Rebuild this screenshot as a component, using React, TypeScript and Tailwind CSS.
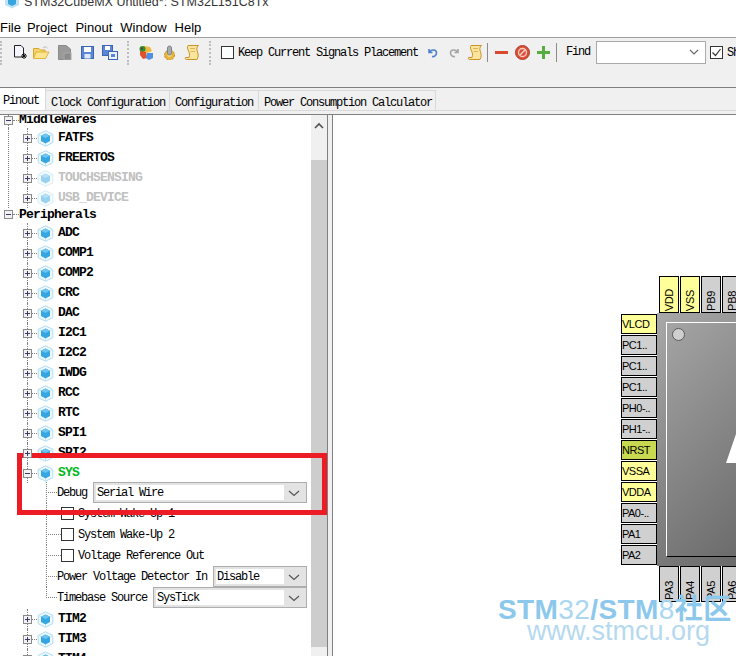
import React from 'react';

const menus = ['File', 'Project', 'Pinout', 'Window', 'Help'];
const tabs = [
  { label: 'Clock Configuration', width: 'w-[124px]' },
  { label: 'Configuration', width: 'w-[89px]' },
  { label: 'Power Consumption Calculator', width: 'w-[177px]' },
];
const upperNodes = ['ADC', 'COMP1', 'COMP2', 'CRC', 'DAC', 'I2C1', 'I2C2', 'IWDG', 'RCC', 'RTC', 'SPI1', 'SPI2'];
const leftPins = [
  { name: 'VLCD', color: 'bg-[#ffff99]' },
  { name: 'PC1..', color: 'bg-[#d0d0d0]' },
  { name: 'PC1..', color: 'bg-[#d0d0d0]' },
  { name: 'PC1..', color: 'bg-[#d0d0d0]' },
  { name: 'PH0-..', color: 'bg-[#d0d0d0]' },
  { name: 'PH1-..', color: 'bg-[#d0d0d0]' },
  { name: 'NRST', color: 'bg-[#c8d850]' },
  { name: 'VSSA', color: 'bg-[#ffff99]' },
  { name: 'VDDA', color: 'bg-[#ffff99]' },
  { name: 'PA0-..', color: 'bg-[#d0d0d0]' },
  { name: 'PA1', color: 'bg-[#d0d0d0]' },
  { name: 'PA2', color: 'bg-[#d0d0d0]' },
];

function CubeIcon({ faded = false }: { faded?: boolean }) {
  return (
    <svg width="17" height="17" viewBox="0 0 17 17" className={`shrink-0 ${faded ? 'opacity-50' : ''}`}>
      <path d="M8.5 .8 15.8 4.4V12.6L8.5 16.2 1.2 12.6V4.4Z" fill="#f3fafe" stroke="#aadcf4" />
      <path d="M1.2 4.4 4 5.8M15.8 4.4 13 5.8M8.5 13.5V16.2" fill="none" stroke="#c5e8f8" />
      <path d="M8.5 3.5 13 5.8V11L8.5 13.4 4 11V5.8Z" fill="#35a6e2" />
      <path d="M4 5.8 8.5 8 13 5.8 8.5 3.5Z" fill="#6cc4ef" />
    </svg>
  );
}

function ExpandBox({ open = false }: { open?: boolean }) {
  return (
    <span className="relative z-10 flex h-[9px] w-[9px] shrink-0 items-center justify-center border border-[#8a8a8a] bg-[#f2f2f2]">
      <span className="absolute h-px w-[5px] bg-[#3a3a6a]" />
      {!open && <span className="absolute h-[5px] w-px bg-[#3a3a6a]" />}
    </span>
  );
}

function TreeNode({ label, tone = 'text-black', faded = false, open = false }: { label: string; tone?: string; faded?: boolean; open?: boolean }) {
  return (
    <div className="relative flex h-[20px] items-center pl-[23px]">
      <span className="absolute bottom-0 left-[27px] top-0 border-l border-dotted border-[#808080]" />
      <ExpandBox open={open} />
      <span className="w-[5px] shrink-0 border-t border-dotted border-[#808080]" />
      <CubeIcon faded={faded} />
      <span className={`ml-[4px] text-[13px] font-bold tracking-[-0.8px] ${tone}`}>{label}</span>
    </div>
  );
}

function RootNode({ label, height, line = false }: { label: string; height: string; line?: boolean }) {
  return (
    <div className={`relative flex items-center pl-[4px] ${height}`}>
      {line && <span className="absolute bottom-0 left-[8px] top-0 border-l border-dotted border-[#808080]" />}
      <ExpandBox open />
      <span className="w-[6px] shrink-0 border-t border-dotted border-[#808080]" />
      <span className="text-[13px] font-bold tracking-[-0.8px] text-black">{label}</span>
    </div>
  );
}

function Select({ value }: { value: string }) {
  return (
    <div className="flex h-[21px] min-w-0 flex-1 items-center border border-[#adadad] bg-[#e3e3e3] p-[2px]">
      <span className="flex h-full flex-1 items-center bg-white pl-[1px] text-[12px] tracking-[-1.2px] text-black">{value}</span>
      <svg width="20" height="14" viewBox="0 0 20 14" className="shrink-0">
        <path d="M5 5 10 9.5 15 5" fill="none" stroke="#555" strokeWidth="1.2" />
      </svg>
    </div>
  );
}

function OptionRow({ label, labelWidth, value, lastChild = false }: { label: string; labelWidth: string; value: string; lastChild?: boolean }) {
  return (
    <div className="relative flex h-[21px] items-center pl-[46px] pr-[4px]">
      <span className={`absolute left-[46px] top-0 border-l border-dotted border-[#808080] ${lastChild ? 'h-[11px]' : 'h-full'}`} />
      <span className="w-[11px] shrink-0 border-t border-dotted border-[#808080]" />
      <span className={`shrink-0 text-[12px] tracking-[-1.2px] text-black ${labelWidth}`}>{label}</span>
      <Select value={value} />
    </div>
  );
}

function CheckRow({ label }: { label: string }) {
  return (
    <div className="relative flex h-[21px] items-center pl-[46px]">
      <span className="absolute bottom-0 left-[46px] top-0 border-l border-dotted border-[#808080]" />
      <span className="w-[15px] shrink-0 border-t border-dotted border-[#808080]" />
      <span className="h-[13px] w-[13px] shrink-0 border border-[#333] bg-white" />
      <span className="ml-[4px] text-[12px] tracking-[-1.2px] text-black">{label}</span>
    </div>
  );
}

function Grip() {
  return <span className="h-[24px] w-[2px] shrink-0 border-l-2 border-dotted border-[#bdbdbd]" />;
}

function ScrollIcon() {
  return (
    <svg width="16" height="17" viewBox="0 0 16 17" className="shrink-0">
      <path d="M4 1.5H14.5C12.5 3 12.5 5.5 13.5 8S14.5 13 13 15.5H2.5C1.5 15.5 1 14.5 1.5 13.5H5C6 11 5.5 9 4.5 7S3 3 4 1.5Z" fill="#fbe59b" stroke="#c8922c" />
      <path d="M6 4.5H11M6.5 7.5H11" stroke="#dcb45a" />
    </svg>
  );
}

function SideSpacer({ className }: { className: string }) {
  return <span className={`shrink-0 ${className}`} />;
}

function Toolbar() {
  return (
    <div className="flex h-[28px] items-center pt-px">
      <Grip />
      <SideSpacer className="w-[11px]" />
      <svg width="14" height="15" viewBox="0 0 14 15" className="shrink-0">
        <path d="M1.5.5H8L10.5 3V12H1.5Z" fill="#f4f6ff" stroke="#222" />
        <path d="M11 8V14M8 11H14M9 9 13 13M13 9 9 13" stroke="#111" />
      </svg>
      <SideSpacer className="w-[6px]" />
      <svg width="17" height="13" viewBox="0 0 17 13" className="shrink-0">
        <path d="M.5 2.5H6L7.5 4H12V12H.5Z" fill="#f7d56c" stroke="#d9a72e" />
        <path d="M3 6H16L12.5 12.5H.5Z" fill="#fde58f" stroke="#e0b23c" />
        <path d="M10 2C11 .5 13.5.5 14.5 2" fill="none" stroke="#bbb" />
      </svg>
      <SideSpacer className="w-[8px]" />
      <svg width="14" height="15" viewBox="0 0 14 15" className="shrink-0">
        <path d="M.5.5H8L12.5 4V14.5H.5Z" fill="#9a9a9a" stroke="#8a8a8a" />
        <rect x="6" y="8" width="7" height="7" fill="#8c8c8c" stroke="#a8a8a8" />
      </svg>
      <SideSpacer className="w-[9px]" />
      <svg width="13" height="13" viewBox="0 0 13 13" className="shrink-0">
        <rect x=".5" y=".5" width="12" height="12" fill="#5b86d6" stroke="#3b66b6" />
        <rect x="3" y="1" width="7" height="5" fill="#fff" />
        <rect x="3.5" y="8" width="6" height="4.5" fill="#dfe8f8" />
      </svg>
      <SideSpacer className="w-[8px]" />
      <svg width="16" height="15" viewBox="0 0 16 15" className="shrink-0">
        <rect x=".5" y=".5" width="10" height="10" fill="#5b86d6" stroke="#3b66b6" />
        <rect x="3" y="1" width="5" height="4" fill="#fff" />
        <rect x="6.5" y="6.5" width="9" height="8" fill="#eef2fb" stroke="#3b66b6" />
        <rect x="9" y="9" width="4" height="3" fill="#5b86d6" />
      </svg>
      <SideSpacer className="w-[9px]" />
      <Grip />
      <SideSpacer className="w-[10px]" />
      <svg width="15" height="15" viewBox="0 0 15 15" className="shrink-0">
        <path d="M5 1 11 2 13 6 8 8 3 6Z" fill="#f0b93a" />
        <circle cx="3.5" cy="4" r="3" fill="#2f8f2f" />
        <circle cx="3" cy="3.5" r="1" fill="#7a1f5a" />
        <path d="M1 6 7 7 8 13 4 14 1 10Z" fill="#e0532a" />
        <path d="M8 8H14V13L10 15 7 13Z" fill="#4f8fe6" />
      </svg>
      <SideSpacer className="w-[8px]" />
      <svg width="15" height="15" viewBox="0 0 15 15" className="shrink-0">
        <circle cx="7.5" cy="10" r="5" fill="#e8b53a" stroke="#c28a1f" strokeDasharray="2 1" />
        <circle cx="7.5" cy="10" r="2" fill="#f7dc8a" />
        <rect x="5.5" y="1" width="4" height="9" rx="2" fill="#a7abb2" stroke="#7e838a" />
      </svg>
      <SideSpacer className="w-[7px]" />
      <ScrollIcon />
      <SideSpacer className="w-[9px]" />
      <Grip />
      <SideSpacer className="w-[10px]" />
      <span className="h-[13px] w-[13px] shrink-0 border border-[#333] bg-white" />
      <span className="ml-[4px] mt-[1px] w-[180px] shrink-0 whitespace-nowrap text-[12px] tracking-[-1.2px] text-black">Keep Current Signals Placement</span>
      <SideSpacer className="w-[10px]" />
      <svg width="10" height="11" viewBox="0 0 10 11" className="shrink-0">
        <path d="M1 2V5.5H4.5M1.5 5C3 2.5 8.5 2 8.5 6 8.5 8.5 6 10 4 9.5" fill="none" stroke="#4f80d0" strokeWidth="1.6" />
      </svg>
      <SideSpacer className="w-[11px]" />
      <svg width="10" height="11" viewBox="0 0 10 11" className="shrink-0">
        <path d="M9 2V5.5H5.5M8.5 5C7 2.5 1.5 2 1.5 6 1.5 8.5 4 10 6 9.5" fill="none" stroke="#a5a5a5" strokeWidth="1.6" />
      </svg>
      <SideSpacer className="w-[8px]" />
      <ScrollIcon />
      <SideSpacer className="w-[4px]" />
      <span className="h-[19px] w-px shrink-0 bg-[#8c8c8c]" />
      <SideSpacer className="w-[7px]" />
      <span className="h-[3px] w-[13px] shrink-0 bg-[#d9492e]" />
      <SideSpacer className="w-[7px]" />
      <svg width="15" height="15" viewBox="0 0 15 15" className="shrink-0">
        <circle cx="7.5" cy="7.5" r="7" fill="#d9503a" stroke="#b23a28" />
        <circle cx="7.5" cy="7.5" r="4" fill="none" stroke="#f6cfc4" strokeWidth="1.3" />
        <path d="M4.7 10.3 10.3 4.7" stroke="#f6cfc4" strokeWidth="1.5" />
      </svg>
      <SideSpacer className="w-[7px]" />
      <svg width="13" height="13" viewBox="0 0 13 13" className="shrink-0">
        <path d="M5 0H8V5H13V8H8V13H5V8H0V5H5Z" fill="#55ad3f" />
      </svg>
      <SideSpacer className="w-[6px]" />
      <span className="h-[19px] w-px shrink-0 bg-[#8c8c8c]" />
      <SideSpacer className="w-[9px]" />
      <span className="-mt-[2px] w-[30px] shrink-0 text-[12px] tracking-[-1.2px] text-black">Find</span>
      <div className="-mt-[1px] flex h-[23px] w-[110px] shrink-0 items-center justify-end border border-[#a9a9a9] bg-white pr-[6px]">
        <svg width="10" height="6" viewBox="0 0 10 6">
          <path d="M1 1 5 5 9 1" fill="none" stroke="#666" strokeWidth="1.1" />
        </svg>
      </div>
      <SideSpacer className="w-[4px]" />
      <span className="flex h-[13px] w-[13px] shrink-0 items-center justify-center border border-[#333] bg-white">
        <svg width="11" height="11" viewBox="0 0 11 11">
          <path d="M1.5 5.5 4.5 8.5 9.5 2" fill="none" stroke="#333" strokeWidth="1.2" />
        </svg>
      </span>
      <span className="ml-[4px] shrink-0 text-[12px] tracking-[-1.2px] text-black">Show</span>
    </div>
  );
}

function VerticalPin({ name, color, height }: { name: string; color: string; height: string }) {
  return (
    <div className={`flex w-[20px] shrink-0 items-end justify-center border border-black pb-[1px] ${height} ${color}`}>
      <span className="rotate-180 text-[11px] leading-[18px] tracking-[-0.3px] text-black [font-family:'Liberation_Sans',sans-serif] [writing-mode:vertical-rl]">{name}</span>
    </div>
  );
}

function Chip() {
  return (
    <div className="relative h-[253px] w-[253px] shrink-0 bg-linear-to-br from-[#a8a8a8] to-[#4c4c4c] pl-[9px] pt-[9px]">
      <div className="relative h-[235px] w-[235px] border-b border-l border-t border-b-black border-l-white border-t-white">
        <span className="absolute left-[5px] top-[5px] h-[13px] w-[13px] rounded-full border border-[#5a5a5a] bg-[#cfcfcf]" />
        <svg width="40" height="32" viewBox="0 0 40 32" className="absolute left-[59px] top-[108px]">
          <path d="M0 32 11 0H40V32Z" fill="#fff" />
        </svg>
      </div>
    </div>
  );
}

export default function App() {
  return (
    <div className="relative h-[656px] w-[736px] overflow-hidden bg-white [font-family:'Liberation_Mono',monospace]">
      <div className="flex h-[15px] items-start gap-[4px] overflow-hidden pl-[4px]">
        <svg width="16" height="16" viewBox="0 0 16 16" className="-mt-[7px] shrink-0">
          <path d="M8 .5 15 4V12L8 15.5 1 12V4Z" fill="#bfe3f5" />
          <path d="M8 4 12 6V11L8 13 4 11V6Z" fill="#35a6e2" />
        </svg>
        <span className="-mt-[5px] whitespace-nowrap text-[12.5px] leading-[15px] text-[#333] [font-family:'Liberation_Sans',sans-serif]">
          STM32CubeMX Untitled*: STM32L151C8Tx
        </span>
      </div>
      <div className="flex h-[22px] items-center gap-[8px] pt-[3px] text-[13px] text-black [font-family:'Liberation_Sans',sans-serif]">
        {menus.map((item) => (
          <span key={item} className="first:-mr-[2px]">{item}</span>
        ))}
      </div>

      <div className="h-[51px] border-y border-b-[#808080] border-t-[#a0a0a0] bg-[#f0f0f0]">
        <Toolbar />
      </div>

      <div className="h-[27px] border-b border-[#808080] bg-[#f0f0f0]">
        <div className="flex h-[23px] items-end border-b border-[#d9d9d9]">
          <div className="flex h-[22px] w-[46px] items-center border-r border-[#d9d9d9] bg-white pl-[3px] pt-[3px] text-[12px] tracking-[-1.2px] text-black">
            Pinout
          </div>
          {tabs.map((tab) => (
            <div key={tab.label} className={`flex h-[20px] items-center border-r border-t border-[#d9d9d9] pl-[5px] pt-[4px] text-[12px] tracking-[-1.2px] text-black ${tab.width}`}>
              {tab.label}
            </div>
          ))}
        </div>
      </div>

      <div className="flex h-[541px] bg-[#f0f0f0]">
        <div className="flex w-[328px] shrink-0 border-r border-[#808080] bg-white">
          <div className="w-[311px] shrink-0 overflow-hidden">
            <div className="-mt-[3px]">
              <RootNode label="MiddleWares" height="h-[16px]" line />
              <div className="relative">
                <span className="absolute bottom-0 left-[8px] top-0 border-l border-dotted border-[#808080]" />
                <TreeNode label="FATFS" />
                <TreeNode label="FREERTOS" />
                <TreeNode label="TOUCHSENSING" tone="text-[#c0c0c0]" faded />
                <TreeNode label="USB_DEVICE" tone="text-[#c0c0c0]" faded />
              </div>
              <RootNode label="Peripherals" height="h-[15px] pb-[2px]" />
              {upperNodes.map((node) => (
                <TreeNode key={node} label={node} />
              ))}
              <TreeNode label="SYS" tone="text-[#00b81c]" open />
              <div className="-mt-px mb-px">
                <OptionRow label="Debug" labelWidth="w-[36px]" value="Serial Wire" />
                <CheckRow label="System Wake-Up 1" />
                <CheckRow label="System Wake-Up 2" />
                <CheckRow label="Voltage Reference Out" />
                <OptionRow label="Power Voltage Detector In" labelWidth="w-[156px]" value="Disable" />
                <OptionRow label="Timebase Source" labelWidth="w-[96px]" value="SysTick" lastChild />
              </div>
              <TreeNode label="TIM2" />
              <TreeNode label="TIM3" />
              <TreeNode label="TIM4" />
            </div>
          </div>
          <div className="w-[16px] shrink-0 bg-[#f0f0f0]">
            <div className="flex h-[45px] justify-center pt-[7px]">
              <svg width="10" height="7" viewBox="0 0 10 7">
                <path d="M1 6 5 2 9 6" fill="none" stroke="#505050" strokeWidth="1.6" />
              </svg>
            </div>
            <div className="h-[487px] bg-[#cdcdcd]" />
          </div>
        </div>

        <div className="ml-[4px] min-w-0 flex-1 overflow-hidden border-l border-[#808080] bg-white pl-[288px] pt-[161px]">
          <div className="flex gap-px pl-[38px]">
            <VerticalPin name="VDD" color="bg-[#ffff99]" height="h-[37px]" />
            <VerticalPin name="VSS" color="bg-[#ffff99]" height="h-[37px]" />
            <VerticalPin name="PB9" color="bg-[#d0d0d0]" height="h-[37px]" />
            <VerticalPin name="PB8" color="bg-[#d0d0d0]" height="h-[37px]" />
          </div>
          <div className="flex">
            <div className="flex w-[36px] shrink-0 flex-col gap-px pt-px">
              {leftPins.map((pin, index) => (
                <div key={index} className={`flex h-[20px] items-center whitespace-nowrap border border-black pt-px text-[11px] tracking-[-0.5px] text-black [font-family:'Liberation_Sans',sans-serif] ${pin.color}`}>
                  {pin.name}
                </div>
              ))}
            </div>
            <Chip />
          </div>
          <div className="flex gap-px pl-[38px]">
            {['PA3', 'PA4', 'PA5', 'PA6'].map((pin) => (
              <VerticalPin key={pin} name={pin} color="bg-[#d0d0d0]" height="h-[36px]" />
            ))}
          </div>
        </div>
      </div>

      <div className="absolute left-[17px] top-[453px] h-[62px] w-[310px] border-[5px] border-[#ed1c24]" />

      <div className="absolute left-[498px] top-[595px] w-[238px] text-[#8cc8ec] [font-family:'Liberation_Sans','Noto_Sans_CJK_SC',sans-serif]">
        <div className="whitespace-nowrap text-[28px] leading-[30px] tracking-[0.4px]">
          <span className="font-bold">STM</span>
          <span className="text-[#a9d6f1]">32</span>
          <span className="font-bold">/STM</span>
          <span className="text-[#a9d6f1]">8</span>
          <span className="font-bold">社区</span>
        </div>
        <div className="-mt-[7px] whitespace-nowrap pl-[29px] text-[27px] leading-[27px] text-[#b5d9ef]">www.stmcu.org</div>
      </div>
    </div>
  );
}
